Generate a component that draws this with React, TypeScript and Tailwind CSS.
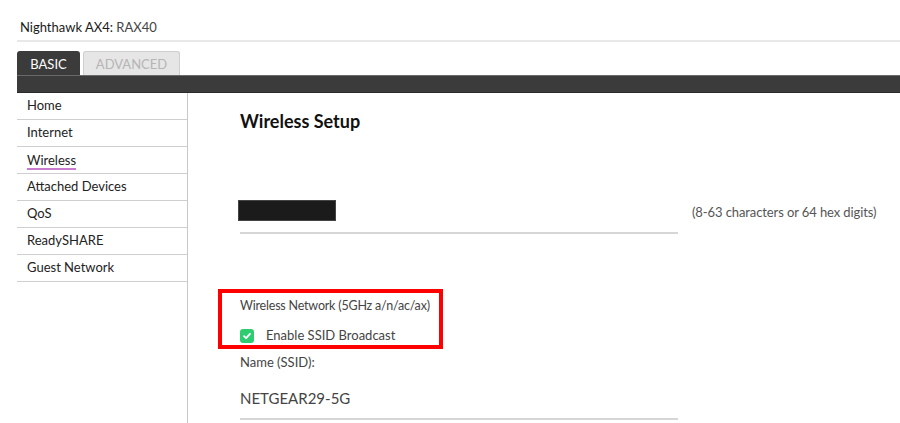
import React from "react";

const menuItems = [
  "Home",
  "Internet",
  "Wireless",
  "Attached Devices",
  "QoS",
  "ReadySHARE",
  "Guest Network",
];

function Sidebar() {
  return (
    <div className="w-[171px] shrink-0 border-r border-[#c8c8c8] min-h-[330px]">
      {menuItems.map((item) => (
        <div
          key={item}
          className="h-[27px] border-b border-[#cfcfcf] pl-[10px] flex items-center text-[13px] text-[#222]"
        >
          {item === "Wireless" ? (
            <span className="border-b-2 border-[#c97bd0] leading-[16px] pt-[2px]">{item}</span>
          ) : (
            <span>{item}</span>
          )}
        </div>
      ))}
    </div>
  );
}

export default function App() {
  return (
    <div
      className="w-[900px] h-[423px] overflow-hidden bg-white text-[#222]"
      style={{ fontFamily: "Lato, 'Open Sans', sans-serif" }}
    >
      <div className="ml-[17px]">
        {/* header */}
        <div className="h-[42px] pt-[19px] pl-[3px] border-b-2 border-[#e8e8e8] text-[13px] leading-[16px]">
          <span className="text-[#1a1a1a]">Nighthawk AX4:</span>{" "}
          <span className="text-[#444]">RAX40</span>
        </div>

        {/* tabs */}
        <div className="flex items-end h-[33px]">
          <div className="w-[63px] h-[24px] pt-[3px] bg-[#3b3b3b] rounded-t-[3px] flex items-center justify-center text-white text-[13px]">
            BASIC
          </div>
          <div className="ml-[3px] w-[97px] h-[24px] pt-[3px] bg-[#e6e6e6] border border-b-0 border-[#cfcfcf] rounded-t-[3px] flex items-center justify-center text-[#b5b5b5] text-[13px]">
            ADVANCED
          </div>
        </div>
        <div className="h-[18px] bg-[#3b3b3b] border-t border-[#6a6a6a] border-b border-b-[#2a2a2a]" />

        {/* body */}
        <div className="flex">
          <Sidebar />
          <div className="pl-[52px] flex-1">
            <h1 className="mt-[18px] text-[18px] font-bold leading-[20px] text-[#111]">
              Wireless Setup
            </h1>

            <div className="mt-[69px] flex items-end">
              <div className="w-[438px]">
                <div className="ml-[-2px] w-[98px] h-[21px] bg-[#1b1b1b] border border-[#444]" />
                <div className="mt-[11px] h-[2px] bg-[#d6d6d6]" />
              </div>
              <div className="ml-[14px] mb-[12px] text-[13px] tracking-[-0.1px] text-[#555]">
                (8-63 characters or 64 hex digits)
              </div>
            </div>

            <div className="mt-[55px] ml-[-22px] w-[225px] h-[60px] border-[4px] border-[#ff0000] pl-[18px] pt-[5px] whitespace-nowrap">
              <div className="text-[12.5px] tracking-[-0.2px] leading-[16px] text-[#444]">
                Wireless Network (5GHz a/n/ac/ax)
              </div>
              <div className="mt-[12px] flex items-center">
                <div className="w-[14px] h-[14px] rounded-[3px] bg-[#2ecc71] flex items-center justify-center">
                  <svg width="10" height="10" viewBox="0 0 10 10">
                    <path d="M2 5.2 L4.1 7.2 L8 2.8" fill="none" stroke="white" strokeWidth="1.8" strokeLinecap="round" strokeLinejoin="round" />
                  </svg>
                </div>
                <span className="ml-[12px] text-[13px] text-[#444]">Enable SSID Broadcast</span>
              </div>
            </div>

            <div className="mt-[5px] text-[13px] leading-[16px] text-[#444]">Name (SSID):</div>
            <div className="mt-[19px] text-[15px] leading-[18px] text-[#444]">NETGEAR29-5G</div>
            <div className="mt-[11px] w-[438px] h-[2px] bg-[#d6d6d6]" />
          </div>
        </div>
      </div>
    </div>
  );
}
